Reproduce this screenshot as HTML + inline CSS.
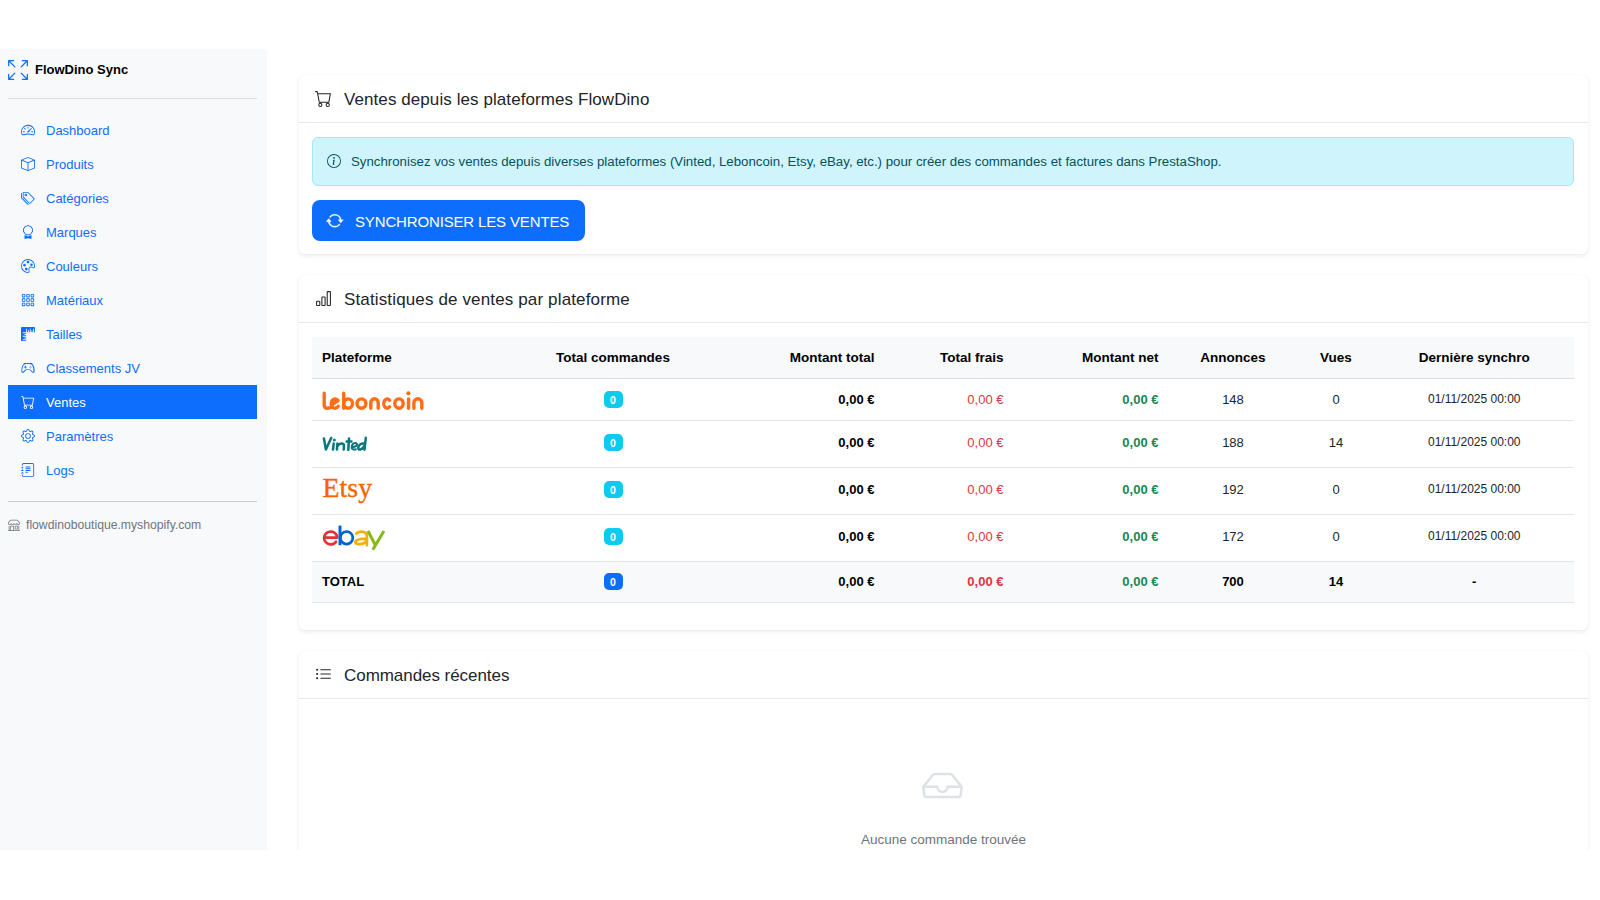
<!DOCTYPE html>
<html><head><meta charset="utf-8">
<style>
*{box-sizing:border-box;margin:0;padding:0}
html,body{width:1600px;height:900px;overflow:hidden;background:#fff;font-family:"Liberation Sans",sans-serif;color:#212529}
.sb{position:absolute;left:0;top:49px;width:267px;height:801px;background:#f8f9fa}
.brand{position:absolute;left:8px;top:60px;height:20px}
.brand svg{position:absolute;left:0;top:0;width:20px;height:20px}
.brand span{position:absolute;left:27px;top:0;line-height:20px;font-size:13px;font-weight:bold;color:#000;white-space:nowrap}
.hr1{position:absolute;left:8px;top:98px;width:249px;height:1px;background:#dcdfe2}
.nav{position:absolute;left:8px;top:113px;width:249px}
.nav a{display:block;position:relative;height:34px;line-height:34px;font-size:13px;color:#0d6efd;text-decoration:none;white-space:nowrap}
.nav a svg{position:absolute;left:13px;top:10px;width:14px;height:14px;fill:currentColor}
.nav a span{position:absolute;left:38px;top:1px}
.nav a.act{background:#0d6efd;color:#fff}
.hr2{position:absolute;left:8px;top:501px;width:249px;height:1px;background:#c9cdd1}
.foot{position:absolute;left:8px;top:517px;height:16px;font-size:12.2px;color:#6c757d;line-height:16px;white-space:nowrap}
.foot svg{position:absolute;left:0;top:2px;width:12px;height:12px;fill:currentColor}
.foot span{position:absolute;left:18px;top:0}
.card{position:absolute;left:299px;width:1289px;background:#fff;border-radius:6px;box-shadow:0 2px 4px rgba(0,0,0,.075),0 0 1px rgba(0,0,0,.06)}
.ch{position:absolute;left:0;top:0;width:100%;height:48px;border-bottom:1px solid #e5e7ea}
.ch svg{position:absolute;left:16px;width:16px;height:16px;fill:currentColor}
.ch span{position:absolute;left:45px;top:1px;line-height:48px;font-size:17px;color:#212529;white-space:nowrap}

.c1{top:75px;height:179px}
.c2{top:275px;height:355px}
.c3{top:651px;height:220px}
.alert{position:absolute;left:13px;top:62px;width:1262px;height:49px;background:#cff4fc;border:1px solid #9eeaf9;border-radius:6px;color:#055160}
.alert svg{position:absolute;left:14px;top:16px;width:14px;height:14px;fill:currentColor}
.alert span{position:absolute;left:38px;top:0;line-height:47px;font-size:13.25px;white-space:nowrap}
.btn{position:absolute;left:13px;top:125px;width:273px;height:41px;background:#0d6efd;border-radius:8px;color:#fff}
.btn svg{position:absolute;left:14px;top:11.5px;width:17.5px;height:17.5px;fill:currentColor;stroke:currentColor;stroke-width:.35}
.btn span{position:absolute;left:43px;top:.5px;line-height:41px;font-size:15px;letter-spacing:-.15px;white-space:nowrap}
.tbl{position:absolute;left:13px;top:62px;width:1262px;border-collapse:collapse;table-layout:fixed;font-size:13px}
.tbl td,.tbl th{padding:0 10px;white-space:nowrap;vertical-align:middle}
.tbl thead th{background:#f8f9fa;height:41px;font-weight:bold;font-size:13.5px;color:#000;border-bottom:1px solid #dcdfe3}
.tbl tbody td{border-bottom:1px solid #e3e6e9;color:#212529}
.tbl tr.r1 td{height:42px}
.tbl tr.r2 td{height:47px;padding-bottom:3px}
.tbl tr.tot td{height:41px;background:#f8f9fa;border-top:1px solid #e3e6e9;font-weight:bold;color:#000}
.l{text-align:left}.c{text-align:center}.r{text-align:right}
.badge{display:inline-block;width:19px;height:17px;line-height:18.5px;border-radius:5px;background:#0dcaf0;color:#fff;font-size:10.5px;font-weight:bold;text-align:center;vertical-align:middle}
.badge.p{background:#0d6efd}
.tbl tr.tot td.green{color:#198754}.tbl td.red{color:#dc3545}.tbl td.green{color:#198754;font-weight:bold}.tbl td.bold{font-weight:bold;color:#000}
.date{font-size:12px}
.empty-ico{position:absolute;left:623px;top:114px;width:41px;height:41px;fill:#dee2e6}
.empty-txt{position:absolute;left:0;top:180.5px;width:100%;text-align:center;font-size:13.5px;color:#6c757d}
.botmask{position:absolute;left:0;top:850px;width:1600px;height:50px;background:#fff}
.ch svg{width:17px;height:17px}
</style></head><body>
<div class="sb"></div>
<div class="brand"><svg viewBox="0 0 16 16" fill="#0d6efd"><path fill-rule="evenodd" d="M5.828 10.172a.5.5 0 0 0-.707 0l-4.096 4.096V11.5a.5.5 0 0 0-1 0v3.975a.5.5 0 0 0 .5.5H4.5a.5.5 0 0 0 0-1H1.732l4.096-4.096a.5.5 0 0 0 0-.707m4.344 0a.5.5 0 0 1 .707 0l4.096 4.096V11.5a.5.5 0 1 1 1 0v3.975a.5.5 0 0 1-.5.5H11.5a.5.5 0 0 1 0-1h2.768l-4.096-4.096a.5.5 0 0 1 0-.707m0-4.344a.5.5 0 0 0 .707 0l4.096-4.096V4.5a.5.5 0 1 0 1 0V.525a.5.5 0 0 0-.5-.5H11.5a.5.5 0 0 0 0 1h2.768l-4.096 4.096a.5.5 0 0 0 0 .707m-4.344 0a.5.5 0 0 1-.707 0L1.025 1.732V4.5a.5.5 0 0 1-1 0V.525a.5.5 0 0 1 .5-.5H4.5a.5.5 0 0 1 0 1H1.732l4.096 4.096a.5.5 0 0 1 0 .707"/></svg><span>FlowDino Sync</span></div>
<div class="hr1"></div>
<div class="nav">
<a><svg viewBox="0 0 16 16"><path d="M8 4a.5.5 0 0 1 .5.5V6a.5.5 0 0 1-1 0V4.5A.5.5 0 0 1 8 4M3.732 5.732a.5.5 0 0 1 .707 0l.915.914a.5.5 0 1 1-.708.708l-.914-.915a.5.5 0 0 1 0-.707M2 10a.5.5 0 0 1 .5-.5h1.586a.5.5 0 0 1 0 1H2.5A.5.5 0 0 1 2 10m9.5 0a.5.5 0 0 1 .5-.5h1.5a.5.5 0 0 1 0 1H12a.5.5 0 0 1-.5-.5m.754-4.246a.39.39 0 0 0-.527-.02L7.547 9.31a.91.91 0 1 0 1.302 1.258l3.434-4.297a.39.39 0 0 0-.029-.518z"/><path fill-rule="evenodd" d="M0 10a8 8 0 1 1 15.547 2.661c-.442 1.253-1.845 1.602-2.932 1.25C11.309 13.488 9.475 13 8 13c-1.474 0-3.31.488-4.615.911-1.087.352-2.49.003-2.932-1.25A8 8 0 0 1 0 10m8-7a7 7 0 0 0-6.603 9.329c.203.575.923.876 1.68.63C4.397 12.533 6.358 12 8 12s3.604.532 4.923.96c.757.245 1.477-.056 1.68-.631A7 7 0 0 0 8 3"/></svg><span>Dashboard</span></a>

<a><svg viewBox="0 0 16 16"><path d="M8.186 1.113a.5.5 0 0 0-.372 0L1.846 3.5 8 5.961 14.154 3.5zM15 4.239l-6.5 2.6v7.922l6.5-2.6V4.24zM7.5 14.762V6.838L1 4.239v7.923zM7.443.184a1.5 1.5 0 0 1 1.114 0l7.129 2.852A.5.5 0 0 1 16 3.5v8.662a1 1 0 0 1-.629.928l-7.185 2.874a.5.5 0 0 1-.372 0L.63 13.09a1 1 0 0 1-.63-.928V3.5a.5.5 0 0 1 .314-.464z"/></svg><span>Produits</span></a>
<a><svg viewBox="0 0 16 16"><path d="M3 2v4.586l7 7L14.586 9l-7-7zM2 2a1 1 0 0 1 1-1h4.586a1 1 0 0 1 .707.293l7 7a1 1 0 0 1 0 1.414l-4.586 4.586a1 1 0 0 1-1.414 0l-7-7A1 1 0 0 1 2 6.586z"/><path d="M5.5 5a.5.5 0 1 1 0-1 .5.5 0 0 1 0 1m0 1a1.5 1.5 0 1 0 0-3 1.5 1.5 0 0 0 0 3M1 7.086a1 1 0 0 0 .293.707L8.75 15.25l-.043.043a1 1 0 0 1-1.414 0l-7-7A1 1 0 0 1 0 7.586V3a1 1 0 0 1 1-1z"/></svg><span>Catégories</span></a>
<a><svg viewBox="0 0 16 16"><path d="M9.669.864 8 0 6.331.864l-1.858.282-.842 1.68-1.337 1.32L2.6 6l-.306 1.854 1.337 1.32.842 1.68 1.858.282L8 12l1.669-.864 1.858-.282.842-1.68 1.337-1.32L13.4 6l.306-1.854-1.337-1.32-.842-1.68zm1.196 1.193.684 1.365 1.086 1.072L12.387 6l.248 1.506-1.086 1.072-.684 1.365-1.51.229L8 10.874l-1.355-.702-1.51-.229-.684-1.365-1.086-1.072L3.614 6l-.25-1.506 1.087-1.072.684-1.365 1.51-.229L8 1.126l1.356.702z"/><path d="M4 11.794V16l4-1 4 1v-4.206l-2.018.306L8 13.126 6.018 12.1z"/></svg><span>Marques</span></a>
<a><svg viewBox="0 0 16 16"><path d="M8 5a1.5 1.5 0 1 0 0-3 1.5 1.5 0 0 0 0 3m4 3a1.5 1.5 0 1 0 0-3 1.5 1.5 0 0 0 0 3M5.5 7a1.5 1.5 0 1 1-3 0 1.5 1.5 0 0 1 3 0m.5 6a1.5 1.5 0 1 0 0-3 1.5 1.5 0 0 0 0 3"/><path d="M16 8c0 3.15-1.866 2.585-3.567 2.07C11.42 9.763 10.465 9.473 10 10c-.603.683-.475 1.819-.351 2.92C9.826 14.495 9.996 16 8 16a8 8 0 1 1 8-8m-8 7c.611 0 .654-.171.655-.176.078-.146.124-.464.07-1.119-.014-.168-.037-.37-.061-.591-.052-.464-.112-1.005-.118-1.462-.01-.707.083-1.61.704-2.314.369-.417.845-.578 1.272-.618.404-.038.812.026 1.16.104.343.077.702.186 1.025.284l.028.008c.346.105.658.199.953.266.653.148.904.083.991.024C14.717 9.38 15 9.161 15 8a7 7 0 1 0-7 7"/></svg><span>Couleurs</span></a>
<a><svg viewBox="0 0 16 16"><path d="M4 2v2H2V2zm1 12v-2a1 1 0 0 0-1-1H2a1 1 0 0 0-1 1v2a1 1 0 0 0 1 1h2a1 1 0 0 0 1-1m0-5V7a1 1 0 0 0-1-1H2a1 1 0 0 0-1 1v2a1 1 0 0 0 1 1h2a1 1 0 0 0 1-1m0-5V2a1 1 0 0 0-1-1H2a1 1 0 0 0-1 1v2a1 1 0 0 0 1 1h2a1 1 0 0 0 1-1m5 10v-2a1 1 0 0 0-1-1H7a1 1 0 0 0-1 1v2a1 1 0 0 0 1 1h2a1 1 0 0 0 1-1m0-5V7a1 1 0 0 0-1-1H7a1 1 0 0 0-1 1v2a1 1 0 0 0 1 1h2a1 1 0 0 0 1-1m0-5V2a1 1 0 0 0-1-1H7a1 1 0 0 0-1 1v2a1 1 0 0 0 1 1h2a1 1 0 0 0 1-1M9 2v2H7V2zm5 0v2h-2V2zM4 7v2H2V7zm5 0v2H7V7zm5 0h-2v2h2zM4 12v2H2v-2zm5 0v2H7v-2zm5 0v2h-2v-2zM12 1a1 1 0 0 0-1 1v2a1 1 0 0 0 1 1h2a1 1 0 0 0 1-1V2a1 1 0 0 0-1-1zm-1 6a1 1 0 0 1 1-1h2a1 1 0 0 1 1 1v2a1 1 0 0 1-1 1h-2a1 1 0 0 1-1-1zm1 4a1 1 0 0 0-1 1v2a1 1 0 0 0 1 1h2a1 1 0 0 0 1-1v-2a1 1 0 0 0-1-1z"/></svg><span>Matériaux</span></a>
<a><svg viewBox="0 0 16 16"><path d="M1 0a1 1 0 0 0-1 1v14a1 1 0 0 0 1 1h5v-1H2v-1h4v-1H4v-1h2v-1H2v-1h4V9H4V8h2V7H2V6h4V2h1v4h1V4h1v2h1V2h1v4h1V4h1v2h1V2h1v4h1V1a1 1 0 0 0-1-1z"/></svg><span>Tailles</span></a>
<a><svg viewBox="0 0 16 16"><path d="M11.5 6.027a.5.5 0 1 1-1 0 .5.5 0 0 1 1 0m-1.5 1.5a.5.5 0 1 0 0-1 .5.5 0 0 0 0 1m2.5-.5a.5.5 0 1 1-1 0 .5.5 0 0 1 1 0m-1.5 1.5a.5.5 0 1 0 0-1 .5.5 0 0 0 0 1m-6.5-3h1v1h1v1h-1v1h-1v-1h-1v-1h1z"/><path d="M3.051 3.26a.5.5 0 0 1 .354-.613l1.932-.518a.5.5 0 0 1 .62.39c.655-.079 1.35-.117 2.043-.117.72 0 1.443.041 2.12.126a.5.5 0 0 1 .622-.399l1.932.518a.5.5 0 0 1 .306.729q.211.136.373.297c.408.408.78 1.05 1.095 1.772.32.733.599 1.591.805 2.466s.34 1.78.364 2.606c.024.816-.059 1.602-.328 2.21a1.42 1.42 0 0 1-1.445.83c-.636-.067-1.115-.394-1.513-.773-.245-.232-.496-.526-.739-.808-.126-.148-.25-.292-.368-.423-.728-.804-1.597-1.527-3.224-1.527s-2.496.723-3.224 1.527c-.119.131-.242.275-.368.423-.243.282-.494.575-.739.808-.398.38-.877.706-1.513.773a1.42 1.42 0 0 1-1.445-.83c-.27-.608-.352-1.395-.329-2.21.024-.826.16-1.73.365-2.606.206-.875.486-1.733.805-2.466.315-.722.687-1.364 1.094-1.772a2.300 2.300 0 0 1 .433-.335l-.028-.079zm2.036.412c-.877.185-1.469.443-1.733.708-.276.276-.587.783-.885 1.465a14 14 0 0 0-.748 2.295 12.400 12.400 0 0 0-.339 2.406c-.022.756.062 1.283.199 1.591.063.142.158.214.321.224.324.034.592-.14.935-.455.181-.17.363-.378.574-.625l.004-.004c.107-.124.22-.257.337-.386.783-.865 1.928-1.866 4.057-1.866s3.273 1.001 4.057 1.866c.116.129.23.262.337.386l.004.004c.211.247.393.455.574.625.343.315.611.49.935.455.163-.01.258-.082.321-.224.137-.308.221-.835.199-1.591a12.400 12.400 0 0 0-.339-2.406 14 14 0 0 0-.748-2.295c-.298-.682-.61-1.190-.885-1.465-.264-.265-.856-.523-1.733-.708-.85-.179-1.877-.27-2.913-.27s-2.063.091-2.913.27"/></svg><span>Classements JV</span></a>
<a class="act"><svg viewBox="0 0 16 16"><path d="M0 1.5A.5.5 0 0 1 .5 1H2a.5.5 0 0 1 .485.379L2.89 3H14.5a.5.5 0 0 1 .491.592l-1.5 8A.5.5 0 0 1 13 12H4a.5.5 0 0 1-.491-.408L2.01 3.607 1.61 2H.5a.5.5 0 0 1-.5-.5M3.102 4l1.313 7h8.170l1.313-7zM5 12a2 2 0 1 0 0 4 2 2 0 0 0 0-4m7 0a2 2 0 1 0 0 4 2 2 0 0 0 0-4m-7 1a1 1 0 1 1 0 2 1 1 0 0 1 0-2m7 0a1 1 0 1 1 0 2 1 1 0 0 1 0-2"/></svg><span>Ventes</span></a>
<a><svg viewBox="0 0 16 16"><path d="M8 4.754a3.246 3.246 0 1 0 0 6.492 3.246 3.246 0 0 0 0-6.492M5.754 8a2.246 2.246 0 1 1 4.492 0 2.246 2.246 0 0 1-4.492 0"/><path d="M9.796 1.343c-.527-1.79-3.065-1.79-3.592 0l-.094.319a.873.873 0 0 1-1.255.52l-.292-.16c-1.64-.892-3.433.902-2.540 2.541l.159.292a.873.873 0 0 1-.52 1.255l-.319.094c-1.790.527-1.790 3.065 0 3.592l.319.094a.873.873 0 0 1 .52 1.255l-.16.292c-.892 1.640.901 3.434 2.541 2.540l.292-.159a.873.873 0 0 1 1.255.52l.094.319c.527 1.790 3.065 1.790 3.592 0l.094-.319a.873.873 0 0 1 1.255-.52l.292.16c1.640.893 3.434-.902 2.540-2.541l-.159-.292a.873.873 0 0 1 .52-1.255l.319-.094c1.790-.527 1.790-3.065 0-3.592l-.319-.094a.873.873 0 0 1-.52-1.255l.16-.292c.893-1.640-.902-3.433-2.541-2.540l-.292.159a.873.873 0 0 1-1.255-.52zm-2.633.283c.246-.835 1.428-.835 1.674 0l.094.319a1.873 1.873 0 0 0 2.693 1.115l.291-.16c.764-.415 1.6.42 1.184 1.185l-.159.292a1.873 1.873 0 0 0 1.116 2.692l.318.094c.835.246.835 1.428 0 1.674l-.319.094a1.873 1.873 0 0 0-1.115 2.693l.16.291c.415.764-.42 1.6-1.185 1.184l-.291-.159a1.873 1.873 0 0 0-2.693 1.116l-.094.318c-.246.835-1.428.835-1.674 0l-.094-.319a1.873 1.873 0 0 0-2.692-1.115l-.292.16c-.764.415-1.6-.42-1.184-1.185l.159-.291A1.873 1.873 0 0 0 1.945 8.930l-.319-.094c-.835-.246-.835-1.428 0-1.674l.319-.094A1.873 1.873 0 0 0 3.060 4.377l-.16-.292c-.415-.764.42-1.6 1.185-1.184l.292.159a1.873 1.873 0 0 0 2.692-1.115z"/></svg><span>Paramètres</span></a>
<a><svg viewBox="0 0 16 16"><path d="M5 10.5a.5.5 0 0 1 .5-.5h2a.5.5 0 0 1 0 1h-2a.5.5 0 0 1-.5-.5m0-2a.5.5 0 0 1 .5-.5h5a.5.5 0 0 1 0 1h-5a.5.5 0 0 1-.5-.5m0-2a.5.5 0 0 1 .5-.5h5a.5.5 0 0 1 0 1h-5a.5.5 0 0 1-.5-.5m0-2a.5.5 0 0 1 .5-.5h5a.5.5 0 0 1 0 1h-5a.5.5 0 0 1-.5-.5"/><path d="M3 0h10a2 2 0 0 1 2 2v12a2 2 0 0 1-2 2H3a2 2 0 0 1-2-2v-1h1v1a1 1 0 0 0 1 1h10a1 1 0 0 0 1-1V2a1 1 0 0 0-1-1H3a1 1 0 0 0-1 1v1H1V2a2 2 0 0 1 2-2"/><path d="M1 5v-.5a.5.5 0 0 1 1 0V5h.5a.5.5 0 0 1 0 1h-2a.5.5 0 0 1 0-1zm0 3v-.5a.5.5 0 0 1 1 0V8h.5a.5.5 0 0 1 0 1h-2a.5.5 0 0 1 0-1zm0 3v-.5a.5.5 0 0 1 1 0v.5h.5a.5.5 0 0 1 0 1h-2a.5.5 0 0 1 0-1z"/></svg><span>Logs</span></a>
</div>
<div class="hr2"></div>
<div class="foot"><svg viewBox="0 0 16 16"><path d="M2.97 1.35A1 1 0 0 1 3.73 1h8.54a1 1 0 0 1 .76.35l2.609 3.044A1.5 1.5 0 0 1 16 5.37v.255a2.375 2.375 0 0 1-4.250 1.458A2.370 2.370 0 0 1 9.875 8 2.370 2.370 0 0 1 8 7.083 2.370 2.370 0 0 1 6.125 8a2.370 2.370 0 0 1-1.875-.917A2.375 2.375 0 0 1 0 5.625V5.37a1.5 1.5 0 0 1 .361-.976zm1.78 4.275a1.375 1.375 0 0 0 2.75 0 .5.5 0 0 1 1 0 1.375 1.375 0 0 0 2.75 0 .5.5 0 0 1 1 0 1.375 1.375 0 1 0 2.75 0V5.37a.5.5 0 0 0-.12-.325L12.27 2H3.73L1.12 5.045A.5.5 0 0 0 1 5.37v.255a1.375 1.375 0 0 0 2.75 0 .5.5 0 0 1 1 0M1.5 8.5A.5.5 0 0 1 2 9v6h1v-5a1 1 0 0 1 1-1h3a1 1 0 0 1 1 1v5h6V9a.5.5 0 0 1 1 0v6h.5a.5.5 0 0 1 0 1H.5a.5.5 0 0 1 0-1H1V9a.5.5 0 0 1 .5-.5M4 15h3v-5H4zm5-5a1 1 0 0 1 1-1h2a1 1 0 0 1 1 1v3a1 1 0 0 1-1 1h-2a1 1 0 0 1-1-1zm3 0h-2v3h2z"/></svg><span>flowdinoboutique.myshopify.com</span></div>
<div class="card c1">
<div class="ch"><svg style="top:15px" viewBox="0 0 16 16"><path d="M0 1.5A.5.5 0 0 1 .5 1H2a.5.5 0 0 1 .485.379L2.89 3H14.5a.5.5 0 0 1 .491.592l-1.5 8A.5.5 0 0 1 13 12H4a.5.5 0 0 1-.491-.408L2.01 3.607 1.61 2H.5a.5.5 0 0 1-.5-.5M3.102 4l1.313 7h8.170l1.313-7zM5 12a2 2 0 1 0 0 4 2 2 0 0 0 0-4m7 0a2 2 0 1 0 0 4 2 2 0 0 0 0-4m-7 1a1 1 0 1 1 0 2 1 1 0 0 1 0-2m7 0a1 1 0 1 1 0 2 1 1 0 0 1 0-2"/></svg><span style="letter-spacing:.08px">Ventes depuis les plateformes FlowDino</span></div>
<div class="alert"><svg viewBox="0 0 16 16"><path d="M8 15A7 7 0 1 1 8 1a7 7 0 0 1 0 14m0 1A8 8 0 1 0 8 0a8 8 0 0 0 0 16"/><path d="m8.93 6.588-2.29.287-.082.38.45.083c.294.07.352.176.288.469l-.738 3.468c-.194.897.105 1.319.808 1.319.545 0 1.178-.252 1.465-.598l.088-.416c-.2.176-.492.246-.686.246-.275 0-.375-.193-.304-.533zM9 4.5a1 1 0 1 1-2 0 1 1 0 0 1 2 0"/></svg><span>Synchronisez vos ventes depuis diverses plateformes (Vinted, Leboncoin, Etsy, eBay, etc.) pour créer des commandes et factures dans PrestaShop.</span></div>
<div class="btn"><svg viewBox="0 0 16 16"><path d="M11.534 7h3.932a.25.25 0 0 1 .192.41l-1.966 2.36a.25.25 0 0 1-.384 0l-1.966-2.36a.25.25 0 0 1 .192-.41m-11 2h3.932a.25.25 0 0 0 .192-.41L2.692 6.23a.25.25 0 0 0-.384 0L.342 8.59A.25.25 0 0 0 .534 9"/><path fill-rule="evenodd" d="M8 3c-1.552 0-2.94.707-3.857 1.818a.5.5 0 1 1-.771-.636A6.002 6.002 0 0 1 13.917 7H12.9A5 5 0 0 0 8 3M3.1 9a5.002 5.002 0 0 0 8.757 2.182.5.5 0 1 1 .771.636A6.002 6.002 0 0 1 2.083 9z"/></svg><span>SYNCHRONISER LES VENTES</span></div>
</div>
<div class="card c2">
<div class="ch"><svg style="top:15px" viewBox="0 0 16 16"><path d="M4 11H2v3h2zm5-4H7v7h2zm5-5v12h-2V2zm-2-1a1 1 0 0 0-1 1v12a1 1 0 0 0 1 1h2a1 1 0 0 0 1-1V2a1 1 0 0 0-1-1zM6 7a1 1 0 0 1 1-1h2a1 1 0 0 1 1 1v7a1 1 0 0 1-1 1H7a1 1 0 0 1-1-1zm-5 4a1 1 0 0 1 1-1h2a1 1 0 0 1 1 1v3a1 1 0 0 1-1 1H2a1 1 0 0 1-1-1z"/></svg><span style="letter-spacing:.14px">Statistiques de ventes par plateforme</span></div>
<table class="tbl">
<colgroup><col style="width:201.5px"><col style="width:199px"><col style="width:172px"><col style="width:129px"><col style="width:155px"><col style="width:129px"><col style="width:77px"><col style="width:199.5px"></colgroup>
<thead><tr><th class="l">Plateforme</th><th class="c">Total commandes</th><th class="r">Montant total</th><th class="r">Total frais</th><th class="r">Montant net</th><th class="c">Annonces</th><th class="c">Vues</th><th class="c">Dernière synchro</th></tr></thead>
<tbody>
<tr class="r1"><td class="l"></td><td class="c"><span class="badge">0</span></td><td class="r bold">0,00 €</td><td class="r red">0,00 €</td><td class="r green">0,00 €</td><td class="c">148</td><td class="c">0</td><td class="c date">01/11/2025 00:00</td></tr>
<tr class="r2"><td class="l"></td><td class="c"><span class="badge">0</span></td><td class="r bold">0,00 €</td><td class="r red">0,00 €</td><td class="r green">0,00 €</td><td class="c">188</td><td class="c">14</td><td class="c date">01/11/2025 00:00</td></tr>
<tr class="r2"><td class="l"></td><td class="c"><span class="badge">0</span></td><td class="r bold">0,00 €</td><td class="r red">0,00 €</td><td class="r green">0,00 €</td><td class="c">192</td><td class="c">0</td><td class="c date">01/11/2025 00:00</td></tr>
<tr class="r2"><td class="l"></td><td class="c"><span class="badge">0</span></td><td class="r bold">0,00 €</td><td class="r red">0,00 €</td><td class="r green">0,00 €</td><td class="c">172</td><td class="c">0</td><td class="c date">01/11/2025 00:00</td></tr>
<tr class="tot"><td class="l">TOTAL</td><td class="c"><span class="badge p">0</span></td><td class="r">0,00 €</td><td class="r" style="color:#dc3545">0,00 €</td><td class="r green">0,00 €</td><td class="c">700</td><td class="c">14</td><td class="c">-</td></tr>
</tbody></table>
<svg class="logos" width="1289" height="355" viewBox="0 0 1289 355" style="position:absolute;left:0;top:0;pointer-events:none">
<g transform="translate(-299,-275)" fill="none" stroke-linecap="round" stroke-linejoin="round">
<g stroke="#ff6e14" stroke-width="3.4">
<path d="M324.2,393.3 V405.2 Q324.2,408.2 327.6,408.2 Q329.5,408.2 331,407.3"/>
<path d="M331.4,405.2 L338,400.6 A3.9,4.6 0 1 0 338.2,406.3"/>
<path d="M343.7,393.3 V408.2 M343.9,403.5 A4.3,4.65 0 1 0 352.5,403.5 A4.3,4.65 0 1 0 343.9,403.5"/>
<ellipse cx="361.45" cy="403.55" rx="4.45" ry="4.65"/>
<path d="M370.8,408.2 V402.5 A3.7,3.7 0 0 1 378.2,402.5 V408.2"/>
<path d="M389.6,400.3 A3.4,4.65 0 1 0 389.6,406.8"/>
<ellipse cx="399" cy="403.55" rx="4.2" ry="4.65"/>
<path d="M408.55,399 V408.2"/>
<path d="M413.9,408.2 V402.7 A3.95,3.9 0 0 1 421.8,402.7 V408.2"/>
</g>
<circle cx="408.4" cy="393.3" r="2.1" fill="#ff6e14"/>
<g stroke="#09777f" stroke-width="2.5">
<path d="M323.9,438.4 L325.9,449.6 L331.2,438"/>
<path d="M333.7,443.6 L333,449.6"/>
<path d="M337.4,443.6 L336.9,449.6 M337.2,446.4 Q339.5,443.4 341.9,443.6 Q344.3,443.9 344,446.5 L343.7,449.6"/>
<path d="M349,438.6 L348.3,449.8 M346.6,441.4 H351.4"/>
<path stroke-width="2.1" d="M352.3,447.4 Q356.6,446.6 357,444.8 Q357.2,442.9 355.2,443 Q351.9,443.3 351.7,447 Q351.6,450.2 355.8,449.4"/>
<path d="M365.2,443.8 Q362.6,442.9 360.4,444.3 Q358,446 358.3,448.4 Q358.7,450.1 360.7,449.4 Q363.7,448.2 364.9,444.5 M365.8,437.8 L364.5,449.7"/>
</g>
<circle cx="334.3" cy="440" r="1.5" fill="#09777f"/>
<text x="23.6" y="222.3" transform="translate(299,275)" font-family="Liberation Serif" font-size="28" fill="#f56400" stroke="#f56400" stroke-width="0.35" textLength="49.5" lengthAdjust="spacingAndGlyphs">Etsy</text>
<g stroke-width="2.7">
<path stroke="#e53238" d="M324.2,537.6 H337.3 A6.6,6.35 0 1 0 336,541.8"/>
<path stroke="#0064d2" stroke-width="3" stroke-linecap="butt" d="M340,525.6 V545.2"/>
<ellipse stroke="#0064d2" cx="346.6" cy="537.85" rx="6.2" ry="6.3"/>
<path stroke="#f5af02" d="M356.2,533.6 Q358.4,531.6 361.3,531.6 Q366.9,531.6 366.9,536.5 V545.2 M366.9,538.6 Q362.5,538.6 359.6,539.3 Q355.4,540.2 355.4,542.2 Q355.6,544.2 359.2,544.2 Q364.8,544.2 366.9,540.2"/>
<path stroke="#86b817" stroke-width="3" stroke-linecap="butt" d="M368,531 L375.6,545.6 M383.9,531 L372.8,549.8"/>
</g>
</g>
</svg>
</div>
<div class="card c3">
<div class="ch"><svg style="top:15px" viewBox="0 0 16 16"><path fill-rule="evenodd" d="M5 11.5a.5.5 0 0 1 .5-.5h9a.5.5 0 0 1 0 1h-9a.5.5 0 0 1-.5-.5m0-4a.5.5 0 0 1 .5-.5h9a.5.5 0 0 1 0 1h-9a.5.5 0 0 1-.5-.5m0-4a.5.5 0 0 1 .5-.5h9a.5.5 0 0 1 0 1h-9a.5.5 0 0 1-.5-.5m-3 1a1 1 0 1 0 0-2 1 1 0 0 0 0 2m0 4a1 1 0 1 0 0-2 1 1 0 0 0 0 2m0 4a1 1 0 1 0 0-2 1 1 0 0 0 0 2"/></svg><span style="letter-spacing:-.05px">Commandes récentes</span></div>
<svg class="empty-ico" viewBox="0 0 16 16"><path d="M4.98 4a.5.5 0 0 0-.39.188L1.54 8H6a.5.5 0 0 1 .5.5 1.5 1.5 0 1 0 3 0A.5.5 0 0 1 10 8h4.46l-3.05-3.812A.5.5 0 0 0 11.02 4zm9.954 5H10.45a2.5 2.5 0 0 1-4.9 0H1.066l.32 2.562a.5.5 0 0 0 .497.438h12.234a.5.5 0 0 0 .496-.438zM3.809 3.563A1.5 1.5 0 0 1 4.981 3h6.038a1.5 1.5 0 0 1 1.172.563l3.7 4.625a.5.5 0 0 1 .105.374l-.39 3.124A1.5 1.5 0 0 1 14.117 13H1.883a1.5 1.5 0 0 1-1.489-1.314l-.39-3.124a.5.5 0 0 1 .106-.374z"/></svg>
<div class="empty-txt">Aucune commande trouvée</div>
</div>
<div class="botmask"></div>
</body></html>
